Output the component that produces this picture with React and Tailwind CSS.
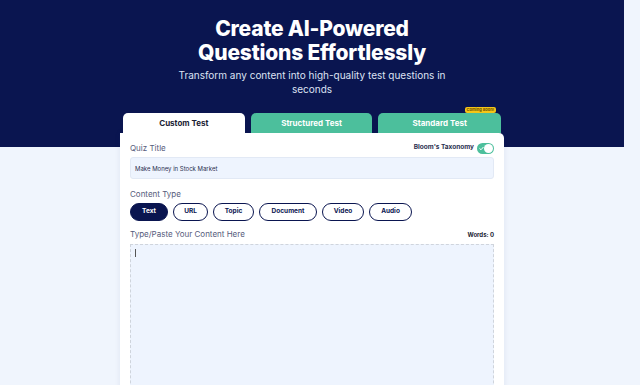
export default function App() {
  const types = ['Text', 'URL', 'Topic', 'Document', 'Video', 'Audio']
  const widths = ['w-[38px]', 'w-[35px]', 'w-[41px]', 'w-[58px]', 'w-[42px]', 'w-[43px]']

  return (
    <div className="min-h-screen bg-[#f0f5fd] font-['Inter',sans-serif] overflow-hidden">
      <div className="w-[624px]">
        <div className="h-[147px] bg-[#0a1550] pt-[17px] text-center">
          <h1 className="text-[21px] font-extrabold leading-[24px] text-white tracking-[-0.2px]">
            Create AI-Powered<br />Questions Effortlessly
          </h1>
          <p className="mx-auto mt-[3px] w-[275px] text-[10px] leading-[14px] text-[#dde2f3]">
            Transform any content into high-quality test questions in seconds
          </p>
        </div>

        <div className="mx-auto -mt-[34px] w-[384px]">
          <div className="flex gap-[6px] px-[3px]">
            <div className="flex h-[20px] w-[122px] items-center justify-center rounded-t-[5px] bg-white text-[8px] font-bold text-[#1a1d33]">
              Custom Test
            </div>
            <div className="flex h-[20px] w-[122px] items-center justify-center rounded-t-[5px] bg-[#4cbf9c] text-[8px] font-bold text-white">
              Structured Test
            </div>
            <div className="relative flex h-[20px] w-[123px] items-center justify-center rounded-t-[5px] bg-[#4cbf9c] text-[8px] font-bold text-white">
              Standard Test
              <span className="absolute -top-[6px] right-[5px] rounded-[2px] bg-[#f5c518] px-[2px] text-[4px] font-bold leading-[6px] text-[#6b4e00]">
                Coming Soon!
              </span>
            </div>
          </div>

          <div className="h-[260px] rounded-tr-[5px] bg-white px-[10px] pt-[9px] shadow-[0_0_6px_rgba(20,40,100,0.08)]">
            <div className="flex items-center justify-between">
              <span className="text-[8px] text-[#555b7b]">Quiz Title</span>
              <div className="flex items-center gap-[3px]">
                <span className="text-[6.5px] font-bold text-[#2a2f50]">Bloom's Taxonomy</span>
                <div className="flex h-[11px] w-[17px] items-center justify-between rounded-full bg-[#4cbf9c] pl-[2px] pr-[1px]">
                  <svg width="5" height="5" viewBox="0 0 10 10" fill="none">
                    <path d="M1.5 5.2 4 7.5 8.5 2.5" stroke="#fff" strokeWidth="2" strokeLinecap="round" strokeLinejoin="round" />
                  </svg>
                  <div className="h-[9px] w-[9px] rounded-full bg-white" />
                </div>
              </div>
            </div>
            <div className="mt-[3px] flex h-[22px] items-center rounded-[3px] border border-[#e2e9f5] bg-[#eef4fe] px-[4px] text-[6px] text-[#2a2f50]">
              Make Money in Stock Market
            </div>

            <div className="mt-[9px] text-[8px] text-[#555b7b]">Content Type</div>
            <div className="mt-[3px] flex gap-[5px]">
              {types.map((t, i) => (
                <div
                  key={t}
                  className={`flex h-[18px] items-center justify-center rounded-full border border-[#0a1550] text-[6.5px] font-bold ${widths[i]} ${
                    i === 0 ? 'bg-[#0a1550] text-white' : 'bg-white text-[#0a1550]'
                  }`}
                >
                  {t}
                </div>
              ))}
            </div>

            <div className="mt-[7px] flex items-center justify-between">
              <span className="text-[8px] text-[#555b7b]">Type/Paste Your Content Here</span>
              <span className="text-[6px] font-bold text-[#1a1d33]">Words: 0</span>
            </div>
            <div className="mt-[4px] h-[200px] border border-dashed border-[#cfd4dc] bg-[#eef4fe] px-[4px] pt-[4px]">
              <div className="h-[8px] w-[1px] bg-[#555]" />
            </div>
          </div>
        </div>
      </div>
    </div>
  )
}
